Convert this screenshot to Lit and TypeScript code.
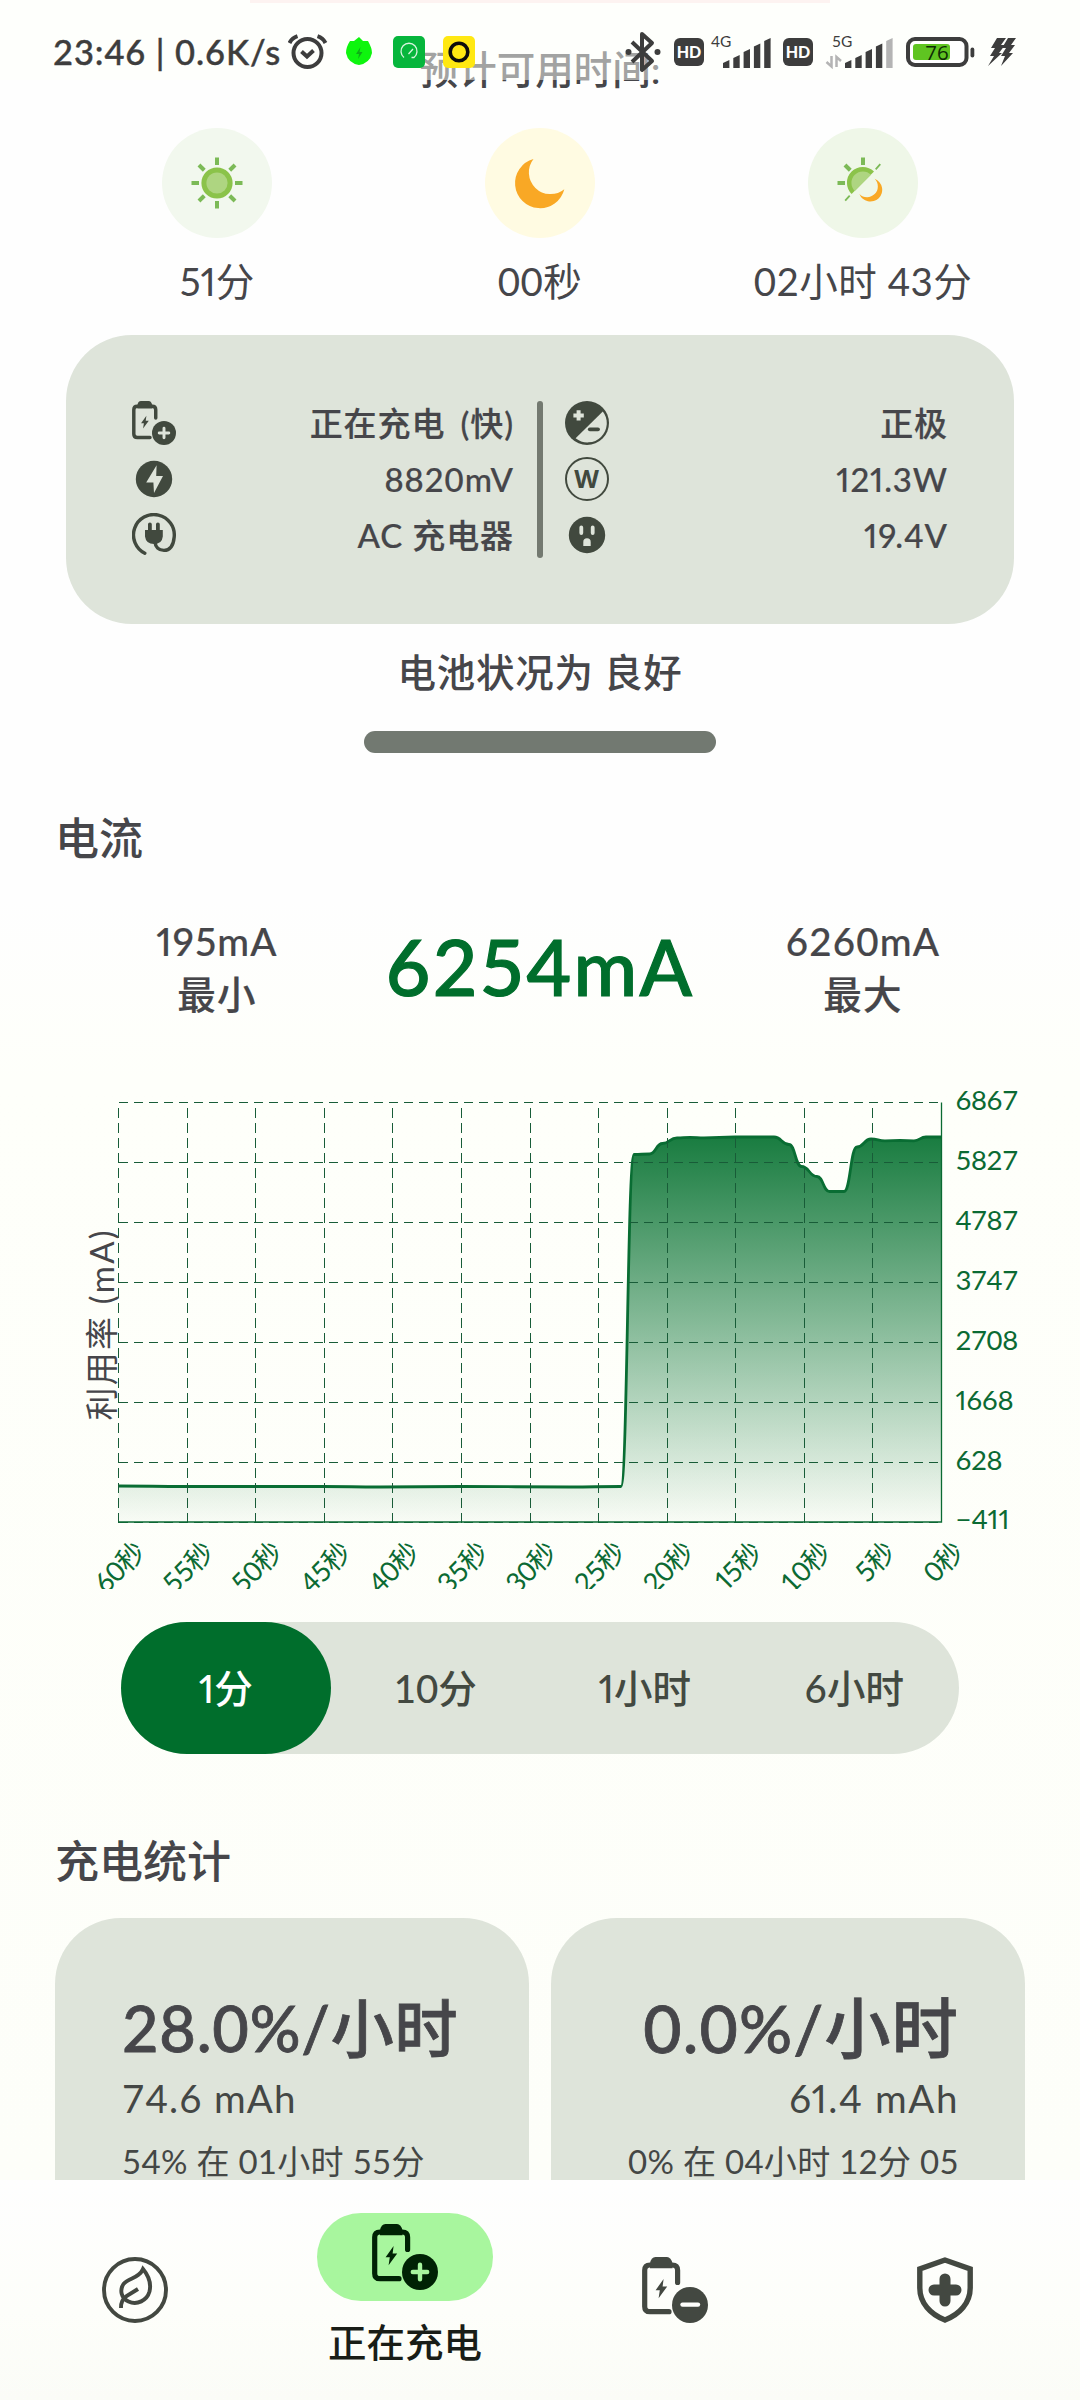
import { LitElement, html, svg, css } from "lit";
import { customElement, property } from "lit/decorators.js";

type IconName =
  | "batteryPlus" | "batteryMinus" | "bolt" | "plug" | "polarity" | "watt"
  | "outlet" | "leaf" | "shield" | "sun" | "moon" | "dayNight";

const batteryBody = svg`
  <path d="M27 54.7H8Q2.7 54.7 2.7 49.4V13.3Q2.7 8 8 8H30.3Q35.6 8 35.6 13.3V25.5"
    fill="none" stroke="currentColor" stroke-width="5.2" stroke-linecap="round"/>
  <path d="M8 11.2V6.5Q9 0 13.5 0H25Q29 0 30.5 6.5V11.2Z" fill="currentColor"/>
  <path d="M21.6 22 13.6 33.2H17.8L16.6 41.2 25.2 29.6H20.6Z" fill="currentColor"/>
  <circle cx="48" cy="48" r="18" fill="currentColor"/>`;

const ray = (angle: number, width = 4) => svg`
  <path d="M0-25.5V-18" stroke="#7cba57" stroke-width=${width} transform="rotate(${angle})"/>`;

const icons: Record<IconName, { box: string; art: unknown }> = {
  batteryPlus: {
    box: "0 0 66 66",
    art: svg`${batteryBody}<path class="knock" d="M48 40.8V55.2M40.8 48H55.2" stroke-width="4.4" stroke-linecap="round"/>`,
  },
  batteryMinus: {
    box: "0 0 66 66",
    art: svg`${batteryBody}<path class="knock" d="M40.5 47.6H56" stroke-width="4.4" stroke-linecap="round"/>`,
  },
  bolt: {
    box: "0 0 44 44",
    art: svg`<circle cx="22" cy="22" r="18.2" fill="currentColor"/>
      <path class="cut" d="M24.6 8.2 14.2 25.6H21.4L22 36 31 19H24.2Z"/>`,
  },
  plug: {
    box: "0 0 44 44",
    art: svg`<path d="M12.8 40.2A20.4 20.4 0 1 1 42.2 24C41.4 32.5 38 37.4 32 37.4C26.5 37.4 23.4 34 23 29"
        fill="none" stroke="currentColor" stroke-width="3.4" stroke-linecap="round"/>
      <path d="M16 11.2Q16 9.6 17.9 9.6Q19.8 9.6 19.8 11.2V17H24V11.2Q24 9.6 25.9 9.6Q27.8 9.6 27.8 11.2V17H30.8V23.5Q30 31 22 31Q14 31 13 23.5V17H16Z" fill="currentColor"/>`,
  },
  polarity: {
    box: "0 0 44 44",
    art: svg`<circle cx="22" cy="22" r="22" fill="currentColor"/>
      <path class="cut" d="M37.8 10.5A19.2 19.2 0 0 1 10.6 37.2Z"/>
      <path class="knock" d="M13.6 9.2V19.6M8.4 14.4H18.8" stroke-width="4"/>
      <path d="M24.8 28.3H33" stroke="currentColor" stroke-width="3.8" stroke-linecap="round"/>`,
  },
  watt: {
    box: "0 0 44 44",
    art: svg`<circle cx="22" cy="22" r="21" fill="none" stroke="currentColor" stroke-width="2"/>
      <text class="watt" x="22" y="31" text-anchor="middle">W</text>`,
  },
  outlet: {
    box: "0 0 44 44",
    art: svg`<circle cx="22" cy="22" r="18.2" fill="currentColor"/>
      <path class="cut" d="M16.3 12.6q1.9 0 1.9 1.9v5.6q0 1.9-1.9 1.9t-1.9-1.9v-5.6q0-1.9 1.9-1.9M27.7 12.6q1.9 0 1.9 1.9v5.6q0 1.9-1.9 1.9t-1.9-1.9v-5.6q0-1.9 1.9-1.9M18.3 33V29a3.7 3.7 0 0 1 7.4 0V33Z"/>`,
  },
  leaf: {
    box: "0 0 66 66",
    art: svg`<g fill="none" stroke="currentColor" stroke-width="3.9">
      <circle cx="33" cy="33" r="31"/>
      <path d="M41 12C46 18 49.5 26 47.5 34.5C45 43.5 35 48.5 26.5 44.5C19 41 17.5 33 21.5 27C27 20.5 37 21.5 41 12Z"/>
      <path d="M19 51C18.8 45.5 20.5 42 24.5 39.2L36 32"/></g>`,
  },
  shield: {
    box: "0 0 56 66",
    art: svg`<path d="M28 3 2.8 12V31C2.8 46 13.5 57.5 28 63C42.5 57.5 53.2 46 53.2 31V12Z"
        fill="none" stroke="currentColor" stroke-width="5.4"/>
      <path d="M28 22V44M17 33H39" stroke="currentColor" stroke-width="11" stroke-linecap="round"/>`,
  },
  sun: {
    box: "-28 -28 56 56",
    art: svg`${[0, 45, 90, 135, 180, 225, 270, 315].map((a) => ray(a))}
      <circle r="15.6" fill="#8bc34a"/><circle r="10.6" fill="#aed581"/>`,
  },
  moon: {
    box: "-28 -28 56 56",
    art: svg`<path d="M-6.5-24A25 25 0 1 0 24.3 6.2A21.7 21.7 0 0 1-6.5-24Z" fill="#f9a825"/>`,
  },
  dayNight: {
    box: "-28 -28 56 56",
    art: svg`${ray(0)}${ray(-45)}${ray(-90)}
      <path d="M12.7-13.7 17.3-18.8M-17.8 17.6-13.3 12.6" stroke="#7cba57" stroke-width="1.8"/>
      <path d="M11-11.4A15.6 15.6 0 1 0-11.4 11Z" fill="#8bc34a"/>
      <path d="M8-8.2A11 11 0 0 0-8.2 8Z" fill="#aed581"/>
      <path d="M11.7-4.2A11.8 11.8 0 1 1-3.6 11A10 10 0 0 0 11.7-4.2Z" fill="#f9a825"/>`,
  },
};

const figures = (text: string) => (/1/.test(text) && !/0/.test(text) ? "narrow" : "");

@customElement("app-icon")
class AppIcon extends LitElement {
  @property() name: IconName = "bolt";

  static styles = css`
    :host { display: block; flex: none; }
    svg { display: block; width: 100%; height: 100%; }
    .cut { fill: var(--knock, #dee4da); }
    .knock { stroke: var(--knock, #dee4da); fill: none; }
    .watt { font: 700 25.5px "Open Sans", sans-serif; fill: currentColor; }
  `;

  render() {
    const icon = icons[this.name];
    return html`<svg viewBox=${icon.box}>${icon.art}</svg>`;
  }
}

@customElement("status-bar")
class StatusBar extends LitElement {
  static styles = css`
    :host {
      display: flex;
      align-items: center;
      box-sizing: border-box;
      height: 80px;
      padding: 0 64px 0 53px;
      background: rgba(254, 255, 250, 0.5);
      color: #3d3d3d;
      font: 500 34.5px/80px Lato, "Noto Sans CJK SC", sans-serif;
    }
    .clock { width: 235px; height: 80px; line-height: 104px; letter-spacing: 0.9px; white-space: nowrap; -webkit-text-stroke: 0.4px currentColor; }
    .spacer { flex: 1; }
    svg { display: block; flex: none; }
    .net { font: 400 15.5px Lato, sans-serif; fill: #3d3d3d; }
    .hd { font: 900 16px Lato, sans-serif; fill: #fff; }
    .level { font: 400 20.5px "Open Sans", sans-serif; fill: #0d2b05; }
  `;

  private bars(x: number, dimLast = false) {
    return [0, 1, 2, 3, 4].map((i) => {
      const left = x + i * 10.3;
      const top = [60, 55, 49, 43.5, 38][i];
      return svg`<path d="M${left} 68V${top + 3}L${left + 6.4} ${top}V68Z"
        fill=${dimLast && i === 4 ? "#b4b4b4" : "#3d3d3d"}/>`;
    });
  }

  private hd(x: number) {
    return svg`<rect x=${x} y="38" width="30" height="28" rx="6" fill="#3d3d3d"/>
      <text class="hd" x=${x + 15} y="58" text-anchor="middle">HD</text>`;
  }

  render() {
    return html`
      <div class="clock">23:46 | 0.6K/s</div>
      <svg width="190" height="80" viewBox="288 0 190 80">
        <circle cx="307.5" cy="53" r="14" fill="none" stroke="#3d3d3d" stroke-width="4"/>
        <path d="M301.5 51.5 307 56.5 313.5 50.5M289.5 43Q292 38 297.5 36.2M325.5 43Q323 38 317.5 36.2" fill="none" stroke="#3d3d3d" stroke-width="4"/>
        <path d="M359 37Q361 39 363 41H368Q372 48 372 53Q370 63 359 65Q348 63 346 53Q346 47 350 41H354Z" fill="#0ef50e"/>
        <path d="M360.5 47 356 54H359L358 59 362.5 52H359.5Z" fill="#0fae17"/>
        <rect x="393" y="36" width="32" height="32" rx="5" fill="#06b63c"/>
        <path d="M404 57.5A8 8 0 1 1 414 57.5H411.5M408.5 54 413 49" fill="none" stroke="#d8f5df" stroke-width="1.3"/>
        <rect x="443" y="36" width="32" height="32" rx="5" fill="#ffe812"/>
        <circle cx="459" cy="52" r="8.8" fill="none" stroke="#0c0c0c" stroke-width="3.6"/>
      </svg>
      <div class="spacer"></div>
      <svg width="391" height="80" viewBox="625 0 391 80">
        <path d="M632 42 652 61 642 70V34L652 43 632 62" fill="none" stroke="#3d3d3d" stroke-width="4" stroke-linejoin="round"/>
        <circle cx="628.5" cy="52" r="3" fill="#3d3d3d"/><circle cx="657.5" cy="52" r="3" fill="#3d3d3d"/>
        ${this.hd(674)}
        <text class="net" x="711" y="47">4G</text>
        ${this.bars(723)}
        ${this.hd(783)}
        <text class="net" x="832" y="47">5G</text>
        <path d="M831.5 56V66.5L826.5 62M836.5 67V57L841 61" fill="none" stroke="#b4b4b4" stroke-width="2.5"/>
        ${this.bars(845, true)}
        <rect x="908" y="39" width="58.5" height="26" rx="7" fill="#fff" stroke="#3d3d3d" stroke-width="4"/>
        <rect x="970.5" y="47.5" width="3.8" height="10" rx="1.9" fill="#3d3d3d"/>
        <rect x="913" y="44" width="37" height="16" rx="3" fill="#5fc421"/>
        <text class="level" x="937" y="60" text-anchor="middle">76</text>
        <path d="M997 38H1006L1001 45H1005L999 53H1002L988 66 994 56H990L995 48H991ZM1008 38H1016L1011 45H1015L1009 53H1013L1001 66 1005 56H1001L1006 48H1002Z" fill="#3d3d3d"/>
      </svg>`;
  }
}

const yTicks = ["6867", "5827", "4787", "3747", "2708", "1668", "628", "−411"];
const xTicks = ["60秒", "55秒", "50秒", "45秒", "40秒", "35秒", "30秒", "25秒", "20秒", "15秒", "10秒", "5秒", "0秒"];
const samples: [number, number][] = [
  [118.5, 426], [186, 426.5], [323, 426.5], [380, 427], [461, 426.5], [570, 427], [621, 426.5],
  [634, 94.5], [649.5, 94], [662.5, 83.5], [677, 77.8], [690, 77.3], [704, 77.8],
  [735, 77], [774, 77], [789, 84.5], [801.5, 106.5], [817, 116.5], [829.5, 131.5],
  [844, 131.5], [857, 87], [871, 79], [885, 80.8], [900, 80.5], [914, 80.8], [926, 77], [941.5, 77],
];

@customElement("current-chart")
class CurrentChart extends LitElement {
  static styles = css`
    :host { display: block; width: 1080px; height: 528.5px; overflow: hidden; }
    svg { display: block; }
    .tick { font: 400 27.5px Lato, "Noto Sans CJK SC", sans-serif; fill: #0b6a33; letter-spacing: -0.4px; }
    .narrow { font-variant-numeric: proportional-nums; letter-spacing: 0; }
    .axis { font: 400 33px Lato, "Noto Sans CJK SC", sans-serif; fill: #46464a; }
    .grid { stroke: #185c38; stroke-width: 1; stroke-dasharray: 9.5 5.5; shape-rendering: crispEdges; }
  `;

  private get line() {
    return samples
      .map(([x, y], i) => {
        if (i === 0) return `M${x} ${y}`;
        const [px, py] = samples[i - 1];
        const mid = (px + x) / 2;
        return `C${mid} ${py} ${mid} ${y} ${x} ${y}`;
      })
      .join("");
  }

  render() {
    const left = 118.5, right = 941.5, top = 42.5, bottom = 462.5;
    const step = (right - left) / 12;
    return html`
      <svg width="1080" height="529" viewBox="0 0 1080 529">
        <defs>
          <linearGradient id="fill" x1="0" y1=${top} x2="0" y2=${bottom} gradientUnits="userSpaceOnUse">
            <stop offset="0" stop-color="#006e2c" stop-opacity="0.98"/>
            <stop offset="1" stop-color="#006e2c" stop-opacity="0.02"/>
          </linearGradient>
        </defs>
        <path d="${this.line}V${bottom}H${left}Z" fill="url(#fill)"/>
        <path d=${this.line} fill="none" stroke="#096d33" stroke-width="2.8"/>
        ${yTicks.map((t, i) => svg`
          <line class="grid" x1=${left} x2=${right} y1=${top + i * 60} y2=${top + i * 60}/>
          <text class="tick ${figures(t)}" x="955.5" y=${50 + i * 60 - (i === 7 ? 1 : 0)}>${t}</text>`)}
        ${xTicks.map((t, i) => {
          const x = left + i * step;
          const shift = t.length > 2 ? 21 : 16.5;
          return svg`
            ${i < 12 ? svg`<line class="grid" x1=${x} x2=${x} y1=${bottom} y2=${top}/>` : ""}
            <text class="tick ${figures(t)}" text-anchor="end" y="10.5"
              transform="translate(${x + shift} 486.5) rotate(-45)">${t}</text>`;
        })}
        <path d="M${left} 462H${right}V${top}" fill="none" stroke="#0a6a33" stroke-width="1.3"/>
        <text class="axis" text-anchor="middle" transform="translate(114 265.5) rotate(-90)" textLength="190">利用率 (mA)</text>
      </svg>`;
  }
}

@customElement("app-root")
class AppRoot extends LitElement {
  static styles = css`
    :host {
      display: block;
      position: relative;
      width: 1080px;
      height: 2400px;
      overflow: hidden;
      background: linear-gradient(#fefefe 0, #fefefe 900px, #fefffa 1080px, #fdfef9 2180px);
      color: #46464a;
      font: 400 38.5px/54px Lato, "Noto Sans CJK SC", sans-serif;
      white-space: nowrap;
    }
    .narrow { font-variant-numeric: proportional-nums; }
    .page { display: flex; flex-direction: column; height: 2180px; overflow: hidden; }
    .medium, .title, .metric, .segments, .details, .condition, .big, .nav-label { font-weight: 500; }
    .previous { flex: none; width: 580px; height: 3px; margin: 0 auto 39px; background: #fce6e8; }
    .heading { flex: none; height: 54px; text-align: center; }
    .estimates { flex: none; display: grid; grid-template-columns: repeat(3, 323px); justify-content: center; margin-top: 32px; }
    .estimate { display: flex; flex-direction: column; align-items: center; gap: 16px; letter-spacing: 0.5px; }
    .estimate .narrow { letter-spacing: 0; }
    .disc { display: grid; place-items: center; width: 110px; height: 110px; border-radius: 50%; background: #f2f8ee; }
    .disc.moon { background: #fffbe2; }
    .disc.mix { background: #eff7e8; }
    .disc app-icon { width: 56px; height: 56px; }
    .details {
      flex: none; box-sizing: border-box; display: grid; grid-template-columns: 382px 6px 383px; column-gap: 22.5px;
      width: 948px; height: 289px; margin: 27px auto 0; padding: 66px; border-radius: 66px;
      background: #dee4da; font-size: 33px; letter-spacing: 0.9px;
      -webkit-text-stroke: 0.2px currentColor;
    }
    .details-column { display: flex; flex-direction: column; gap: 12px; }
    .detail { display: flex; justify-content: space-between; height: 44px; line-height: 44px; }
    .detail app-icon { width: 44px; height: 44px; color: #41493e; }
    .spread { word-spacing: 6px; }
    .divider { border-radius: 3px; background: #737970; }
    .condition { flex: none; margin-top: 21px; text-align: center; letter-spacing: 0.7px; }
    .handle { flex: none; width: 352px; height: 22px; margin: 32px auto 0; border-radius: 11px; background: #727971; }
    .title { flex: none; margin-left: 55px; font-size: 44px; line-height: 60px; }
    .current { margin-top: 55px; }
    .metrics { flex: none; display: grid; grid-template-columns: repeat(3, 323px); justify-content: center; height: 106px; margin-top: 47px; text-align: center; line-height: 53px; letter-spacing: 1.2px; -webkit-text-stroke: 0.2px currentColor; }
    .main { font-size: 77px; line-height: 102px; color: #006e2c; letter-spacing: 2.3px; -webkit-text-stroke: 1.2px currentColor; }
    .chart { flex: none; margin-top: 39px; }
    .segments { flex: none; display: grid; grid-template-columns: repeat(4, 1fr); width: 838px; height: 132px; margin: 33.5px auto 0; border-radius: 66px; background: #dee4da; color: #434941; line-height: 132px; text-align: center; }
    .segment.on { border-radius: 66px; background: #006e2c; color: #fff; }
    .stats-title { margin-top: 77px; }
    .cards { flex: none; display: grid; grid-template-columns: 474px 474px; gap: 22px; margin: 27px 55px 0; }
    .card { box-sizing: border-box; height: 340px; padding: 72px 66px 0 67px; border-radius: 66px; background: #dee4da; color: #444745; }
    .card.end { text-align: right; }
    .big { font-size: 63px; line-height: 76px; color: #46464a; letter-spacing: 0.8px; -webkit-text-stroke: 0.8px currentColor; }
    .end .big { font-size: 66px; letter-spacing: 1.2px; }
    .amount { margin-top: 2px; line-height: 60px; letter-spacing: 1.2px; }
    .amount.narrow { letter-spacing: 1.6px; }
    .span { margin-top: 9px; font-size: 33px; line-height: 48px; letter-spacing: 0.3px; }
    .nav { display: grid; grid-template-columns: repeat(4, 270px); height: 220px; background: linear-gradient(#fefefe, #fdfefa 60%, #fbfcf7); }
    .nav-item { display: flex; flex-direction: column; align-items: center; padding-top: 77px; color: #434841; --knock: #fefefc; }
    .nav-item app-icon { width: 66px; height: 66px; }
    .nav-item.on { padding-top: 32.5px; color: #002204; --knock: #a8f69e; }
    .pill { display: grid; place-items: center; width: 176px; height: 88px; border-radius: 44px; background: #a8f69e; }
    .nav-label { margin-top: 14.5px; color: #191d17; }
    status-bar { position: absolute; inset: 0 0 auto 0; }
  `;

  private detail(icon: IconName, text: string, tone = "") {
    return html`<div class="detail"><app-icon .name=${icon}></app-icon><span class="${figures(text)} ${tone}">${text}</span></div>`;
  }

  private estimate(icon: IconName, tone: string, text: string) {
    return html`<div class="estimate">
      <div class="disc ${tone}"><app-icon .name=${icon}></app-icon></div>
      <div class=${figures(text)}>${text}</div>
    </div>`;
  }

  render() {
    return html`
      <main class="page">
        <div class="previous"></div>
        <div class="heading medium">预计可用时间:</div>
        <section class="estimates">
          ${this.estimate("sun", "", "51分")}
          ${this.estimate("moon", "moon", "00秒")}
          ${this.estimate("dayNight", "mix", "02小时 43分")}
        </section>
        <section class="details">
          <div class="details-column">
            ${this.detail("batteryPlus", "正在充电 (快)", "spread")}
            ${this.detail("bolt", "8820mV")}
            ${this.detail("plug", "AC 充电器")}
          </div>
          <div class="divider"></div>
          <div class="details-column">
            ${this.detail("polarity", "正极")}
            ${this.detail("watt", "121.3W")}
            ${this.detail("outlet", "19.4V")}
          </div>
        </section>
        <div class="condition">电池状况为 良好</div>
        <div class="handle"></div>
        <div class="title current">电流</div>
        <section class="metrics">
          <div class="metric narrow">195mA<br>最小</div>
          <div class="metric main">6254mA</div>
          <div class="metric">6260mA<br>最大</div>
        </section>
        <current-chart class="chart"></current-chart>
        <div class="segments">
          ${["1分", "10分", "1小时", "6小时"].map((s, i) => html`<div class="segment ${figures(s)} ${i === 0 ? "on" : ""}">${s}</div>`)}
        </div>
        <div class="title stats-title">充电统计</div>
        <section class="cards">
          <div class="card">
            <div class="big">28.0%/小时</div>
            <div class="amount">74.6 mAh</div>
            <div class="span">54% 在 01小时 55分</div>
          </div>
          <div class="card end">
            <div class="big">0.0%/小时</div>
            <div class="amount narrow">61.4 mAh</div>
            <div class="span">0% 在 04小时 12分 05</div>
          </div>
        </section>
      </main>
      <nav class="nav">
        <div class="nav-item"><app-icon .name=${"leaf"}></app-icon></div>
        <div class="nav-item on">
          <div class="pill"><app-icon .name=${"batteryPlus"}></app-icon></div>
          <div class="nav-label">正在充电</div>
        </div>
        <div class="nav-item"><app-icon .name=${"batteryMinus"}></app-icon></div>
        <div class="nav-item"><app-icon .name=${"shield"}></app-icon></div>
      </nav>
      <status-bar></status-bar>`;
  }
}
